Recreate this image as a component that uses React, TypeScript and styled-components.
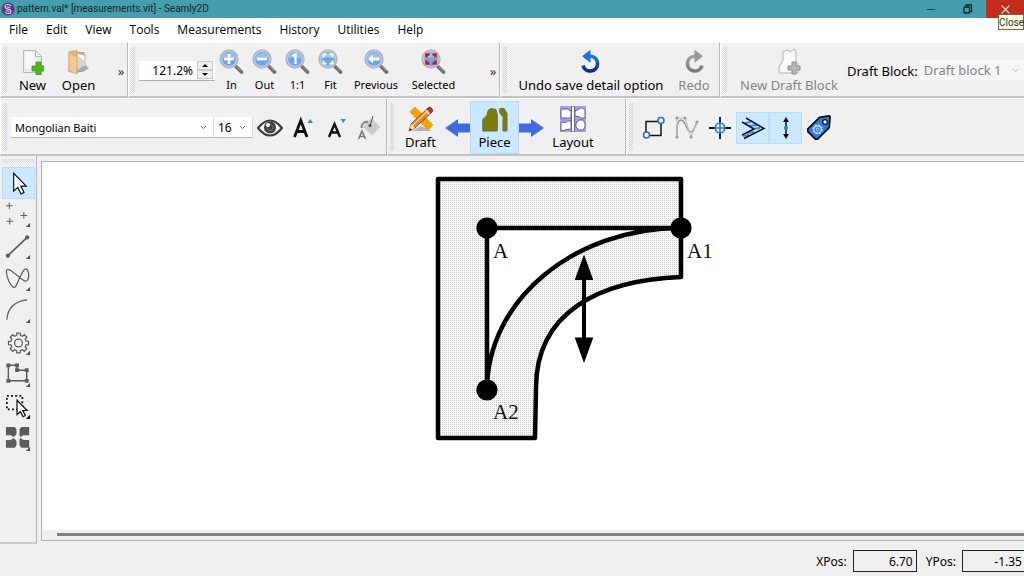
import React from 'react';
import styled, { createGlobalStyle, css } from 'styled-components';

const Global = createGlobalStyle`
  * { box-sizing: border-box; }
  body { margin: 0; background: #f0f0f0; overflow: hidden; }
  button, input, select, label { font-family: "Noto Sans", "Open Sans", sans-serif; color: #000; }
  button { cursor: default; }
`;

const Window = styled.div`
  display: flex;
  flex-direction: column;
  min-height: 100vh;
  background: #f0f0f0;
  font-family: "Noto Sans", "Open Sans", sans-serif;
`;

/* ---------- title bar ---------- */
const TitleBar = styled.header`
  display: flex;
  align-items: center;
  height: 18px;
  background: #469dad;
  color: #10272c;
  padding-left: 1px;
`;
const Title = styled.h1`
  flex: 1;
  margin: 0 0 0 2px;
  font: 400 10px/18px Roboto, sans-serif;
  white-space: nowrap;
`;
const CaptionButton = styled.button<{ $close?: boolean }>`
  position: relative;
  display: flex;
  align-items: center;
  justify-content: center;
  width: ${p => (p.$close ? 38 : 37)}px;
  height: 18px;
  padding: 0;
  border: 0;
  background: ${p => (p.$close ? '#c42b1c' : 'transparent')};
`;
const Tooltip = styled.span`
  position: absolute;
  top: 14px;
  right: 0;
  width: 26px;
  height: 16px;
  border: 1px solid #66665c;
  background: #ffffe1;
  color: #333;
  font: 400 10px/15px Roboto, sans-serif;
  text-align: center;
  z-index: 2;
`;

/* ---------- menu ---------- */
const MenuBar = styled.nav`
  display: flex;
  align-items: center;
  gap: 18px;
  height: 24px;
  padding: 0 9px;
  background: #fff;
`;
const MenuItem = styled.button`
  padding: 0;
  border: 0;
  background: none;
  font: 400 12px/24px "Open Sans", sans-serif;
`;

/* ---------- tool bars ---------- */
const ToolRow = styled.div`
  display: flex;
`;
const ToolBar = styled.section<{ $w?: number; $h: number }>`
  display: flex;
  align-items: center;
  ${p => (p.$w ? css`width: ${p.$w}px; flex: none;` : css`flex: 1; min-width: 0; overflow: hidden;`)}
  height: ${p => p.$h}px;
  padding: 2px 0 0 2px;
  border-top: 1px solid #fff;
  border-left: 1px solid #fff;
  border-bottom: 2px solid #c4c4c4;
  border-right: ${p => (p.$w ? '1px solid #b8b8b8' : '0')};
`;
const Handle = styled.span<{ $horizontal?: boolean }>`
  flex: none;
  ${p => (p.$horizontal ? css`height: 4px; margin: 3px 2px 4px 3px;` : css`width: 4px; align-self: stretch; margin: 2px 0 3px;`)}
  background: repeating-conic-gradient(#cfcfcf 0 25%, #f6f6f6 0 50%) 0 0 / 2px 2px;
`;
const Spacer = styled.span<{ $w?: number }>`
  ${p => (p.$w ? css`width: ${p.$w}px; flex: none;` : css`flex: 1;`)}
`;
const ToolButton = styled.button<{ $w: number; $size?: number; $active?: boolean; $muted?: boolean }>`
  display: flex;
  flex-direction: column;
  align-items: center;
  flex: none;
  gap: 2px;
  width: ${p => p.$w}px;
  padding: 4px 0 0;
  border: 1px solid ${p => (p.$active ? '#b5dcf8' : 'transparent')};
  background: ${p => (p.$active ? '#cce8ff' : 'none')};
  height: 53px;
  color: ${p => (p.$muted ? '#838383' : '#000')};
  font-size: ${p => p.$size ?? 13}px;
  line-height: 16px;
  white-space: nowrap;
  svg { flex: none; }
`;
const IconButton = styled.button<{ $active?: boolean }>`
  position: relative;
  display: flex;
  align-items: center;
  justify-content: center;
  flex: none;
  width: 33px;
  height: 32px;
  padding: 0;
  border: 1px solid ${p => (p.$active ? '#b5dcf8' : 'transparent')};
  background: ${p => (p.$active ? '#cce8ff' : 'none')};
`;
const MoreButton = styled.button`
  width: 12px;
  padding: 0;
  border: 0;
  background: none;
  color: #333;
  font-size: 13px;
  line-height: 16px;
`;
const SpinBox = styled.div`
  display: flex;
  flex: none;
  align-items: center;
  width: 76px;
  height: 20px;
  padding-right: 2px;
  background: #fff;
  border-bottom: 1px solid #b0b0b0;
`;
const SpinInput = styled.input`
  flex: 1;
  min-width: 0;
  padding: 0 4px 0 0;
  border: 0;
  background: none;
  text-align: right;
  font-size: 12px;
`;
const SpinButtons = styled.div`
  display: flex;
  flex-direction: column;
  width: 16px;
`;
const SpinButton = styled.button`
  display: flex;
  align-items: center;
  justify-content: center;
  height: 9px;
  padding: 0;
  border: 1px solid #c8c8c8;
  background: #f0f0f0;
`;
const SelectBox = styled.div<{ $w: number; $muted?: boolean }>`
  display: flex;
  position: relative;
  flex: none;
  width: ${p => p.$w}px;
  height: 21px;
  background: ${p => (p.$muted ? '#f6f6f6' : '#fff')};
  border-right: 1px solid #e2e2e2;
  border-bottom: 1px solid ${p => (p.$muted ? '#ececec' : '#b4b4b4')};
  svg { position: absolute; right: 6px; top: 8px; pointer-events: none; }
`;
const Select = styled.select<{ $size: number; $muted?: boolean }>`
  width: 100%;
  appearance: none;
  padding: 0 4px;
  border: 0;
  background: none;
  font-size: ${p => p.$size}px;
  color: ${p => (p.$muted ? '#838383' : '#000')};
  opacity: 1;
`;
const FieldLabel = styled.label<{ $size: number }>`
  flex: none;
  font-size: ${p => p.$size}px;
  white-space: nowrap;
`;

/* ---------- work area ---------- */
const Work = styled.main`
  display: flex;
  flex: 1;
`;
const SideBar = styled.aside`
  display: flex;
  flex-direction: column;
  flex: none;
  width: 37px;
  border-right: 1px solid #b4b4b4;
  border-bottom: 2px solid #cccccc;
`;
const SideTools = styled.div`
  display: flex;
  flex-direction: column;
  padding-left: 2px;
`;
const Canvas = styled.section`
  display: flex;
  flex-direction: column;
  flex: 1;
  min-width: 0;
  margin: 5px 0 3px 4px;
  border: 1px solid #b0b5bc;
  border-right: 0;
  background: #fff;
  overflow: hidden;
`;
const Scene = styled.div`
  flex: 1;
  svg { display: block; }
`;
const ScrollTrack = styled.div`
  height: 10px;
  padding: 3px 0 0 15px;
  background: #f0f0f0;
`;
const ScrollThumb = styled.div`
  height: 3px;
  background: #808080;
`;
const StatusBar = styled.footer`
  display: flex;
  align-items: center;
  justify-content: flex-end;
  height: 32px;
  padding-top: 2px;
`;
const PosField = styled.input<{ $last?: boolean }>`
  width: ${p => (p.$last ? 62 : 64)}px;
  height: 22px;
  margin: 0 ${p => (p.$last ? 0 : 9)}px 0 6px;
  padding: 0 ${p => (p.$last ? 2 : 3)}px 0 0;
  border: 1px solid #222;
  border-right-width: ${p => (p.$last ? 0 : 1)}px;
  background: #f0f0f0;
  text-align: right;
  font-size: 12px;
`;

/* ---------- icons ---------- */
const Chevron = ({ color = '#777' }: { color?: string }) => (
  <svg width="7" height="5" viewBox="0 0 7 5"><path d="M1 1l2.5 2.6L6 1" fill="none" stroke={color} /></svg>
);

const Lens = ({ children }: { children: React.ReactNode }) => (
  <svg width="25" height="26" viewBox="0 0 25 26">
    <path d="M16 16.5l2 2" stroke="#bbb" strokeWidth="3" />
    <path d="M17.5 18l5 5" stroke="#6f6f6f" strokeWidth="3.6" strokeLinecap="round" />
    <path d="M17.8 17.4l4.6 4.6" stroke="#a5a5a5" strokeWidth="1" />
    <circle cx="10" cy="10" r="8.8" fill="#6fa3e4" stroke="#b4b7bb" strokeWidth="1.8" />
    <circle cx="10" cy="10" r="7.4" fill="none" stroke="#d9e7f8" strokeWidth="0.8" />
    <path d="M3.2 9.5a7 7 0 0 1 13.6 0q-6.8-2-13.6 0z" fill="#9cc1f0" />
    {children}
  </svg>
);

const NewIcon = () => (
  <svg width="22" height="26" viewBox="0 0 22 26">
    <path d="M1.500 1.500h12l6 6V23.500h-18z" fill="#ececec" stroke="#b9b9b9" />
    <path d="M3 3h9v7l6 3v4L3 20z" fill="#f9f9f9" />
    <path d="M13.500 1.500l6 6h-6z" fill="#fff" stroke="#b9b9b9" />
    <path d="M14 13h5v4h4v5h-4v4h-5v-4h-4v-5h4z" fill="#52b423" stroke="#3b8f17" strokeWidth="0.8" />
  </svg>
);
const OpenIcon = () => (
  <svg width="22" height="26" viewBox="0 0 22 26">
    <path d="M1 3l8-1.500 1 2h6V22l-15 1z" fill="#e9b877" stroke="#c9965a" strokeWidth="0.8" />
    <path d="M9 4l8 2v15l-8 2z" fill="#fff" stroke="#999" strokeWidth="0.8" />
    <path d="M11 8v13M13 9v12M15 11v9" stroke="#aaa" />
    <path d="M1 4l8 3.500V25l-8-3z" fill="#f2cb93" stroke="#d3a266" strokeWidth="0.8" />
    <path d="M9 24l12-4-3-4-9 5z" fill="#8a8a8a" opacity="0.6" />
  </svg>
);
const UndoIcon = ({ redo }: { redo?: boolean }) => (
  <svg width="22" height="26" viewBox="0 0 22 26">
    <defs>
      <linearGradient id={redo ? 'redoTone' : 'undoTone'} x1="0" y1="0" x2="0" y2="26" gradientUnits="userSpaceOnUse">
        <stop offset="0.3" stopColor={redo ? '#a0a0a0' : '#1578e6'} />
        <stop offset="0.9" stopColor={redo ? '#777' : '#0b1c8c'} />
      </linearGradient>
    </defs>
    <g transform={redo ? 'translate(22 0) scale(-1 1)' : undefined}>
      <path d="M9 7.300h2a7.400 7.400 0 1 1-8 9.200" fill="none" stroke={redo ? 'url(#redoTone)' : 'url(#undoTone)'} strokeWidth="3.600" />
      <path d="M2 7.300l8.500-6.500v13z" fill={redo ? '#999' : '#1573e0'} />
    </g>
  </svg>
);
const NewBlockIcon = () => (
  <svg width="24" height="26" viewBox="0 0 24 26">
    <path d="M6 3l4-2q4 3 7-1l2 3v9l2 5v7H2V18l4-7z" fill="#fafafa" stroke="#b0b0b0" />
    <path d="M15 13h4v4h4v4h-4v4h-4v-4h-4v-4h4z" fill="#b5b5b5" stroke="#8d8d8d" />
  </svg>
);
const EyeIcon = () => (
  <svg width="26" height="18" viewBox="0 0 26 18">
    <path d="M1 9Q13-6 25 9 13 24 1 9z" fill="#f4f4f4" stroke="#3d3d3d" strokeWidth="2.200" />
    <circle cx="13" cy="8.500" r="6" fill="#3d3d3d" />
    <circle cx="13" cy="8.500" r="3" fill="none" stroke="#777" />
    <circle cx="11" cy="6" r="2" fill="#fff" />
  </svg>
);
const FontSizeIcon = ({ up }: { up?: boolean }) => (
  <svg width="22" height="24" viewBox="0 0 22 24">
    {up
      ? <><path d="M2.500 21L8.800 4.500L15 21M4 15.500H13.500" fill="none" stroke="#111" strokeWidth="2.800" /><path d="M15.500 7l2.700-4L21 7z" fill="#3d7df0" /></>
      : <><path d="M4 21L9.500 8L15 21M6 16.500H13" fill="none" stroke="#111" strokeWidth="2.400" /><path d="M15.500 3H21L18.200 7z" fill="#3d7df0" /></>}
  </svg>
);
const BucketIcon = () => (
  <svg width="24" height="26" viewBox="0 0 24 26">
    <path d="M14 3l9.500 9-8.500 8.500-9-8.500z" fill="#cbcbcb" />
    <path d="M16 1l-3 10" stroke="#555" />
    <circle cx="13" cy="10.500" r="1.500" fill="#444" />
    <path d="M11 7Q5 6 4.500 13" fill="none" stroke="#8a8a8a" strokeWidth="2" />
    <path d="M1.500 24l3.500-8 3.500 8M3 21.500h4.500" fill="none" stroke="#777" strokeWidth="1.600" />
  </svg>
);
const DraftIcon = () => (
  <svg width="26" height="26" viewBox="0 0 26 26">
    <path d="M4 25h20l-11-5z" fill="#b5b5b5" />
    <path d="M2 6l5-5 18 18-5 5z" fill="#f6a500" stroke="#e18b00" strokeWidth="0.600" />
    <path d="M1 25l2-7L20 2l4 4L7 22z" fill="#d98a3d" stroke="#6e3b16" strokeWidth="0.800" />
    <path d="M4.500 19.500L20.500 4" stroke="#f6c48a" strokeWidth="1.500" />
    <path d="M19 3l2-2q3 0 4 4l-2 2z" fill="#b83324" stroke="#7b2018" strokeWidth="0.600" />
    <path d="M17.500 4.500L21.500 8.500" stroke="#ddd" strokeWidth="1.500" />
    <path d="M1 25l2-7 4 4z" fill="#f3d7b0" /><path d="M1 25l1-3 2 2z" fill="#222" />
  </svg>
);
const PieceIcon = () => (
  <svg width="26" height="26" viewBox="0 0 26 26">
    <path d="M.800 25V13.500L5 9.500 6 4.500 9 2.500l5 1 1.300 5V25z" fill="#7b7d08" stroke="#6a6c4a" strokeWidth="1" />
    <path d="M18 2.500h4l3 5V25h-4V11l-3.500-4.500z" fill="#7b7d08" stroke="#6a6c4a" strokeWidth="1" />
  </svg>
);
const LayoutIcon = () => (
  <svg width="26" height="26" viewBox="0 0 26 26">
    <rect width="26" height="26" fill="#a3a0fa" />
    <g fill="#fff" stroke="#5a5a6a" strokeWidth="0.900">
      <path d="M1 3h7l1.500 1.500h1.500V12H1zM1 16l5 .500 1.500-1.500h3.500v8l-4 .500L1 25z" />
      <path d="M16 4h2l2-2h2.500L25 4v8h-4l-2-1.500-4-.5V6zM17 16l2-2h4l2 3v4l-2 3h-4l-3-3v-3z" />
      <path d="M11.500 0h3v26h-3z" />
    </g>
  </svg>
);
const ArrowIcon = ({ left }: { left?: boolean }) => (
  <svg width="25" height="20" viewBox="0 0 25 20">
    <path d={left ? 'M0 10L13 1v4.500H25v9H13V19z' : 'M25 10L12 1v4.500H0v9H12V19z'} fill="#416be0" />
  </svg>
);
const TagIcon = () => (
  <svg width="26" height="26" viewBox="0 0 28 28">
    <path d="M2 15L14.500 2.500 25 1l1 1-1 11.500L12.500 26 10 26 2 18z" fill="#2f78e4" stroke="#111" strokeWidth="1.800" strokeLinejoin="round" />
    <circle cx="20.500" cy="7.500" r="2.500" fill="#fff" stroke="#111" strokeWidth="1.400" />
    <circle cx="12.500" cy="15.500" r="4" fill="none" stroke="#c4dcff" strokeWidth="1.500" />
    <circle cx="12.500" cy="15.500" r="5" fill="none" stroke="#c4dcff" strokeWidth="1.200" strokeDasharray="2 1.930" />
    <circle cx="12.500" cy="15.500" r="1.500" fill="none" stroke="#c4dcff" />
  </svg>
);

const gear = Array.from({ length: 8 }, (_, i) => {
  const p = (r: number, d: number) => {
    const a = ((i * 45 + d) * Math.PI) / 180;
    return `${(16 + r * Math.cos(a)).toFixed(1)} ${(16 + r * Math.sin(a)).toFixed(1)}`;
  };
  return `${i ? 'L' : 'M'}${p(8, -14)}L${p(10.5, -10)}L${p(10.5, 10)}L${p(8, 14)}`;
}).join('') + 'Z';

const Corner = ({ dark }: { dark?: boolean }) => (
  <path d="M28 24v4.500h-4.500z" fill={dark ? '#111' : '#555'} stroke="none" />
);
const Side = ({ children }: { children: React.ReactNode }) => (
  <svg width="32" height="32" viewBox="0 0 32 32" fill="none" stroke="#5c5c5c">{children}</svg>
);
const pointer = 'M0 0v16.500l3.800-3.500 3 6 2.800-1.400-3-5.800h5z';

const sideTools: { name: string; active?: boolean; icon: React.ReactNode }[] = [
  { name: 'Select', active: true, icon: <path d={pointer} transform="translate(11 6) scale(1.12)" fill="#fff" stroke="#111" strokeWidth="1.100" /> },
  { name: 'Points', icon: <><path d="M3 6.500h7M6.500 3v7M3.500 22.500h7M7 19v7M18 16.500h7M21.500 13v7" /><Corner /></> },
  { name: 'Lines', icon: <><path d="M5 25L25 6" strokeWidth="1.700" /><circle cx="5" cy="25" r="1.700" fill="#5c5c5c" /><circle cx="25" cy="6" r="1.700" fill="#5c5c5c" /><Corner /></> },
  { name: 'Curves', icon: <><path d="M11 25Q5 20 3.500 9 3 5 7 6.500L22 18Q27 19 26.500 11 25 1 20 9L14 22Q12.500 26 10 24" strokeWidth="1.300" /><Corner /></> },
  { name: 'Arcs', icon: <><path d="M4 25Q5 7 25 4.500" strokeWidth="1.300" /><Corner /></> },
  { name: 'Operations', icon: <><path d={gear} strokeWidth="1.300" /><circle cx="16" cy="16" r="4" strokeWidth="1.300" /><Corner /></> },
  { name: 'Pieces', icon: <><path d="M5.500 6h9v5h10v11h-19z" strokeWidth="1.500" /><path d="M3.500 4h4v4h-4zM12.500 4h4v4h-4zM12.500 9h4v4h-4zM22.500 9h4v4h-4zM22.500 20h4v4h-4zM3.500 20h4v4h-4z" fill="#5c5c5c" stroke="none" /><Corner /></> },
  { name: 'Details', icon: <><path d="M4 4.500h16v14H4z" stroke="#111" strokeWidth="1.800" strokeDasharray="2 2.300" /><path d={pointer} transform="translate(14.500 9) scale(.9)" fill="#fff" stroke="#111" strokeWidth="1.400" /><Corner dark /></> },
  { name: 'Layout', icon: <><path d="M3 3.500h9l3 3.500h1l3-3.500h8V12h-6l-3 2-3-3h-1l-3 3-3-2H3zM3 25h9l3-3.500h1l3 3.500h8v-8h-6l-3-2-3 3h-1l-3-3-3 2H3z" fill="#5c5c5c" stroke="none" /><path d="M14 3h3v23h-3z" fill="#f0f0f0" stroke="none" /><Corner /></> },
];

const menus = ['File', 'Edit', 'View', 'Tools', 'Measurements', 'History', 'Utilities', 'Help'];

const zooms: { label: string; w: number; mark: React.ReactNode }[] = [
  { label: 'In', w: 33, mark: <path d="M10 5v10M5 10h10" stroke="#fff" strokeWidth="2.600" /> },
  { label: 'Out', w: 33, mark: <path d="M5 10h10" stroke="#fff" strokeWidth="2.600" /> },
  { label: '1:1', w: 33, mark: <path d="M7.500 7l3-2v10" fill="none" stroke="#fff" strokeWidth="2.200" /> },
  { label: 'Fit', w: 33, mark: <path d="M5.500 8.500v-3h3M11.500 5.500h3v3M14.500 11.500v3h-3M8.500 14.500h-3v-3" fill="none" stroke="#fff" strokeWidth="1.800" /> },
  { label: 'Previous', w: 58, mark: <path d="M4 10l5-4.500V8.500h6.500v3H9v3z" fill="#fff" /> },
  { label: 'Selected', w: 57, mark: <path d="M5.500 8.500v-3h3M11.500 5.500h3v3M14.500 11.500v3h-3M8.500 14.500h-3v-3" fill="none" stroke="#dc1212" strokeWidth="2.600" /> },
];

const Drawing = () => (
  <svg width="700" height="290" viewBox="42 162 700 290">
    <defs>
      <pattern id="dense" width="2" height="2" patternUnits="userSpaceOnUse">
        <rect width="2" height="2" fill="#f8f8f8" />
        <rect width="1" height="1" fill="#cacaca" />
      </pattern>
    </defs>
    <path fillRule="evenodd" fill="url(#dense)" d="M438 179H681V277C600 280 536 312 536 388L535 438H438ZM487 228V390C487 300 574 228 681 228Z" />
    <g fill="none" stroke="#000" strokeLinejoin="round">
      <path d="M438 179H681V277C600 280 536 312 536 388L535 438H438Z" strokeWidth="4.500" />
      <path d="M681 228H487V390C487 300 574 228 681 228Z" strokeWidth="4.500" />
      <path d="M584 270V350" strokeWidth="4" />
    </g>
    <path d="M584 254.500l9.300 25.500h-18.600zM584 363l9.300-25.500h-18.600z" />
    <circle cx="487" cy="228" r="10.600" />
    <circle cx="681" cy="228" r="10.600" />
    <circle cx="487" cy="390" r="10.600" />
    <g fontFamily="Liberation Serif, serif" fontSize="21" fill="#111">
      <text x="493" y="258">A</text>
      <text x="687" y="258">A1</text>
      <text x="493" y="419">A2</text>
    </g>
  </svg>
);

export default function App() {
  return (
    <Window>
      <Global />
      <TitleBar>
        <svg width="14" height="14" viewBox="0 0 14 14">
          <circle cx="7" cy="7" r="6.600" fill="#5b3a8e" />
          <path d="M10 4Q9 2.500 7 2.500 4 2.500 4 4.500 4 6.500 7 7 10 7.500 10 9.500 10 11.500 7 11.500 5 11.500 4 10M9 5.500Q6 4.500 6 5.500M5 8.500Q8 9.500 8 8.800" fill="none" stroke="#e3d8f2" strokeWidth="1.100" />
        </svg>
        <Title>pattern.val* [measurements.vit] - Seamly2D</Title>
        <CaptionButton aria-label="Minimize"><svg width="8" height="8"><path d="M0 4.500h8" stroke="#1c3d45" /></svg></CaptionButton>
        <CaptionButton aria-label="Restore">
          <svg width="10" height="10" fill="none" stroke="#10272c" strokeWidth="1.300"><rect x="1" y="3" width="5.500" height="6" rx="1" /><path d="M3 2.500V1h5.500v6.500H7" /></svg>
        </CaptionButton>
        <CaptionButton $close aria-label="Close">
          <svg width="9" height="9"><path d="M.5.5l8 8M8.500.5l-8 8" stroke="#f3d9c8" strokeWidth="1.200" /></svg>
          <Tooltip>Close</Tooltip>
        </CaptionButton>
      </TitleBar>

      <MenuBar>{menus.map(m => <MenuItem key={m}>{m}</MenuItem>)}</MenuBar>

      <ToolRow>
        <ToolBar $w={128} $h={56}>
          <Handle />
          <Spacer $w={3} />
          <ToolButton $w={45}><NewIcon />New</ToolButton>
          <ToolButton $w={47}><OpenIcon />Open</ToolButton>
          <Spacer />
          <MoreButton aria-label="More file tools">»</MoreButton>
        </ToolBar>
        <ToolBar $w={372} $h={56}>
          <Handle />
          <Spacer $w={4} />
          <SpinBox>
            <SpinInput aria-label="Zoom" defaultValue="121.2%" />
            <SpinButtons>
              <SpinButton aria-label="Zoom up"><svg width="6" height="3"><path d="M0 3l3-3 3 3z" /></svg></SpinButton>
              <SpinButton aria-label="Zoom down"><svg width="6" height="3"><path d="M0 0l3 3 3-3z" /></svg></SpinButton>
            </SpinButtons>
          </SpinBox>
          {zooms.map(z => (
            <ToolButton key={z.label} $w={z.w} $size={11}><Lens>{z.mark}</Lens>{z.label}</ToolButton>
          ))}
          <Spacer />
          <MoreButton aria-label="More zoom tools">»</MoreButton>
        </ToolBar>
        <ToolBar $w={220} $h={56}>
          <Handle />
          <Spacer $w={5} />
          <ToolButton $w={158}><UndoIcon />Undo save detail option</ToolButton>
          <ToolButton $w={48} $muted disabled><UndoIcon redo />Redo</ToolButton>
        </ToolBar>
        <ToolBar $h={56}>
          <Handle />
          <Spacer $w={7} />
          <ToolButton $w={110} $muted disabled><NewBlockIcon />New Draft Block</ToolButton>
          <Spacer $w={3} />
          <FieldLabel $size={13} htmlFor="block">Draft Block:</FieldLabel>
          <Spacer $w={2} />
          <SelectBox $w={106} $muted>
            <Select id="block" $size={13} $muted disabled><option>Draft block 1</option></Select>
            <Chevron color="#b5b5b5" />
          </SelectBox>
        </ToolBar>
      </ToolRow>

      <ToolRow>
        <ToolBar $w={387} $h={58}>
          <Handle />
          <Spacer $w={4} />
          <SelectBox $w={203}>
            <Select aria-label="Font" $size={11}><option>Mongolian Baiti</option></Select>
            <Chevron />
          </SelectBox>
          <SelectBox $w={39}>
            <Select aria-label="Font size" $size={12}><option>16</option></Select>
            <Chevron />
          </SelectBox>
          <IconButton aria-label="Show names"><EyeIcon /></IconButton>
          <IconButton aria-label="Increase font"><FontSizeIcon up /></IconButton>
          <IconButton aria-label="Decrease font"><FontSizeIcon /></IconButton>
          <IconButton aria-label="Text color"><BucketIcon /></IconButton>
        </ToolBar>
        <ToolBar $w={239} $h={58}>
          <Handle />
          <Spacer $w={2} />
          <ToolButton $w={49}><DraftIcon />Draft</ToolButton>
          <ArrowIcon left />
          <ToolButton $w={49} $active><PieceIcon />Piece</ToolButton>
          <ArrowIcon />
          <ToolButton $w={58}><LayoutIcon />Layout</ToolButton>
        </ToolBar>
        <ToolBar $h={58}>
          <Handle />
          <Spacer $w={4} />
          <IconButton aria-label="Show points">
            <svg width="24" height="24" fill="none"><path d="M4 5.500h15v14H4z" stroke="#111" strokeWidth="1.500" /><circle cx="19" cy="4.500" r="3" fill="#f0f0f0" stroke="#2c6ea6" strokeWidth="1.500" /><circle cx="4.500" cy="19" r="3" fill="#f0f0f0" stroke="#2c6ea6" strokeWidth="1.500" /></svg>
          </IconButton>
          <IconButton aria-label="Show curves">
            <svg width="24" height="24" fill="none" stroke="#999"><path d="M2 21Q1 5 6 4C11 4 11 16 16 16 19 16 20 10 22 6" strokeWidth="1.500" /><path d="M2 21V2h8M16 21l6-15M10 2l6 19" stroke="#bbb" /><g fill="#999" stroke="none"><circle cx="2" cy="2" r="1.600" /><circle cx="10" cy="2" r="1.600" /><circle cx="2" cy="21" r="1.600" /><circle cx="16" cy="21" r="1.600" /><circle cx="22" cy="6" r="1.600" /></g></svg>
          </IconButton>
          <IconButton aria-label="Show axis">
            <svg width="24" height="24" fill="none"><path d="M1 12h22M12 1v22" stroke="#111" strokeWidth="1.800" /><circle cx="12" cy="12" r="4.800" fill="#f0f0f0" stroke="#2b78e4" strokeWidth="1.800" /><path d="M8 12h8M12 8v8" stroke="#2b78e4" strokeWidth="1.600" /></svg>
          </IconButton>
          <IconButton $active aria-label="Show seam allowances">
            <svg width="26" height="24" fill="none"><path d="M5 7l6-1M9 10l8-1M12 13l8-1M7 17l7-1M3 20l6-1" stroke="#3b84e8" strokeWidth="2" /><path d="M6 2l18 10.500L4 22.500M2 6l12 7-12 6" stroke="#111" strokeWidth="1.500" /></svg>
          </IconButton>
          <IconButton $active aria-label="Show grainlines">
            <svg width="12" height="24"><path d="M6 4v16" stroke="#111" strokeWidth="1.500" /><path d="M6 1l3 5H3zM6 23l3-5H3z" fill="#111" /><circle cx="6" cy="12" r="2" fill="#2b78e4" /></svg>
          </IconButton>
          <IconButton aria-label="Show labels"><TagIcon /></IconButton>
        </ToolBar>
      </ToolRow>

      <Work>
        <SideBar>
          <Handle $horizontal />
          <SideTools>
            {sideTools.map(t => (
              <IconButton key={t.name} $active={t.active} aria-label={t.name}><Side>{t.icon}</Side></IconButton>
            ))}
          </SideTools>
        </SideBar>
        <Canvas>
          <Scene><Drawing /></Scene>
          <ScrollTrack><ScrollThumb /></ScrollTrack>
        </Canvas>
      </Work>

      <StatusBar>
        <FieldLabel $size={12} htmlFor="xpos">XPos:</FieldLabel>
        <PosField id="xpos" readOnly value="6.70" />
        <FieldLabel $size={12} htmlFor="ypos">YPos:</FieldLabel>
        <PosField id="ypos" $last readOnly value="-1.35" />
      </StatusBar>
    </Window>
  );
}
